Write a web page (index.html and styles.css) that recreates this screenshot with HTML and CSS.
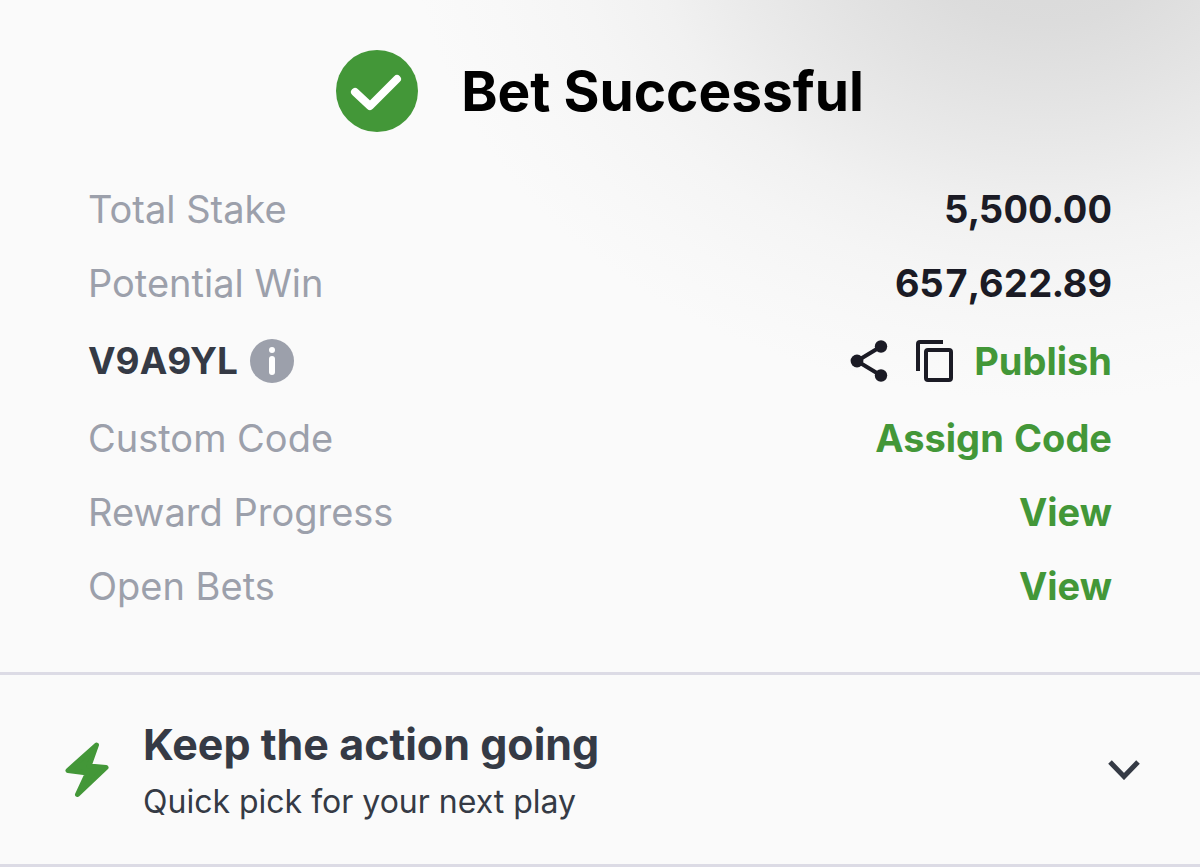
FILE: index.html
```html
<!DOCTYPE html>
<html lang="en">
<head>
<meta charset="utf-8">
<meta name="viewport" content="width=device-width, initial-scale=1">
<title>Bet Successful</title>
<link rel="stylesheet" href="styles.css">
</head>
<body>
<main class="page">
  <section class="receipt">
    <header class="heading">
      <svg class="heading-icon" viewBox="0 0 82 82" aria-hidden="true">
        <circle cx="41" cy="41" r="41" fill="#439738"/>
        <path d="M19 42 L34 56 L61 29" fill="none" stroke="#fff" stroke-width="8" stroke-linecap="round" stroke-linejoin="round"/>
      </svg>
      <h1 class="title">Bet Successful</h1>
    </header>
    <dl class="details">
      <div class="row">
        <dt class="label">Total Stake</dt>
        <dd class="value">5,500.00</dd>
      </div>
      <div class="row">
        <dt class="label">Potential Win</dt>
        <dd class="value">657,622.89</dd>
      </div>
      <div class="row row-code">
        <dt class="code">V9A9YL
          <button class="icon-button" type="button" aria-label="About booking code">
            <svg class="info-icon" viewBox="0 0 44 44" aria-hidden="true">
              <circle cx="22" cy="22" r="22" fill="#9ca0ab"/>
              <circle cx="22" cy="11" r="3" fill="#fff"/>
              <path d="M22 20V33" stroke="#fff" stroke-width="6" stroke-linecap="round"/>
            </svg>
          </button>
        </dt>
        <dd class="actions">
          <button class="icon-button" type="button" aria-label="Share">
            <svg class="share-icon" viewBox="0 0 38 42" aria-hidden="true">
              <path d="M31 6.500L7 21L31 35.500" fill="none" stroke="#1b1b25" stroke-width="4"/>
              <circle cx="31" cy="6.500" r="6.200" fill="#1b1b25"/>
              <circle cx="7" cy="21" r="6.400" fill="#1b1b25"/>
              <circle cx="31" cy="35.500" r="6.200" fill="#1b1b25"/>
            </svg>
          </button>
          <button class="icon-button" type="button" aria-label="Copy">
            <svg class="copy-icon" viewBox="0 0 38 42" aria-hidden="true">
              <path d="M27 2H4Q2 2 2 4V31" fill="none" stroke="#1b1b25" stroke-width="4"/>
              <rect x="10" y="10" width="25" height="30" rx="2" fill="none" stroke="#1b1b25" stroke-width="4"/>
            </svg>
          </button>
          <button class="link-button" type="button">Publish</button>
        </dd>
      </div>
      <div class="row">
        <dt class="label">Custom Code</dt>
        <dd class="value"><button class="link-button" type="button">Assign Code</button></dd>
      </div>
      <div class="row">
        <dt class="label">Reward Progress</dt>
        <dd class="value"><a class="link" href="#rewards">View</a></dd>
      </div>
      <div class="row">
        <dt class="label">Open Bets</dt>
        <dd class="value"><a class="link" href="#bets">View</a></dd>
      </div>
    </dl>
  </section>
  <button class="quick-pick" type="button" aria-expanded="false">
    <svg class="bolt-icon" viewBox="0 0 44 56" aria-hidden="true">
      <path d="M31.500 3L3 28.500L22.500 31L12.500 52.500L41 25.500L24 24Z" fill="#439738" stroke="#439738" stroke-width="5" stroke-linejoin="round"/>
    </svg>
    <span class="quick-text">
      <span class="quick-title">Keep the action going</span>
      <span class="quick-subtitle">Quick pick for your next play</span>
    </span>
    <svg class="chevron-icon" viewBox="0 0 32 20" aria-hidden="true">
      <path d="M2 2L16 16.500L30 2" fill="none" stroke="#353a45" stroke-width="5"/>
    </svg>
  </button>
</main>
</body>
</html>
```
FILE: styles.css
```css
* {
  box-sizing: border-box;
}

body {
  margin: 0;
  background: #fafafa;
  color: #1b1b25;
  font-family: Inter, "Liberation Sans", sans-serif;
}

button {
  padding: 0;
  border: 0;
  background: none;
  color: inherit;
  font: inherit;
  cursor: pointer;
}

svg {
  display: block;
  flex: none;
}

.receipt {
  padding: 50px 88px 63px;
  background: radial-gradient(ellipse 630px 470px at 87% -70px,
    #d8d8d8 0%, #dcdcdc 20%, #e3e3e3 35%, #eaeaea 49%, #f1f1f1 62%, #f5f5f5 74%, #f8f8f8 88%, #fafafa 100%);
}

.heading {
  display: flex;
  align-items: center;
  justify-content: center;
  gap: 43px;
}

.heading-icon {
  width: 82px;
  height: 82px;
}

.title {
  margin: 0;
  color: #000;
  font-size: 55px;
  font-weight: 700;
  line-height: 68px;
}

.details {
  display: flex;
  flex-direction: column;
  gap: 28px;
  margin: 54px 0 0;
  font-size: 38px;
  line-height: 46px;
}

.row {
  display: flex;
  align-items: center;
  justify-content: space-between;
}

.row-code {
  min-height: 53px;
}

.label {
  color: #9ca0ab;
}

.value,
.actions {
  margin: 0;
  font-weight: 700;
  font-variant-numeric: tabular-nums;
}

.code {
  display: flex;
  align-items: center;
  gap: 12px;
  color: #353a45;
  font-size: 37px;
  font-weight: 700;
}

.info-icon {
  width: 44px;
  height: 44px;
}

.actions {
  display: flex;
  align-items: center;
  gap: 20px;
}

.share-icon {
  width: 38px;
  height: 42px;
  margin-right: 8px;
}

.copy-icon {
  width: 38px;
  height: 42px;
}

.link,
.link-button {
  color: #439738;
  text-decoration: none;
}

.quick-pick {
  display: flex;
  align-items: center;
  width: 100%;
  padding: 41px 60px 40px 65px;
  border-top: 3px solid #dcdbe5;
  border-bottom: 3px solid #dcdbe5;
  color: #353a45;
  text-align: left;
}

.bolt-icon {
  width: 44px;
  height: 56px;
}

.quick-text {
  display: flex;
  flex: 1;
  flex-direction: column;
  gap: 8px;
  padding-left: 34px;
}

.quick-title {
  font-size: 43px;
  font-weight: 700;
  line-height: 56px;
}

.quick-subtitle {
  font-size: 32px;
  line-height: 44px;
}

.chevron-icon {
  width: 32px;
  height: 20px;
}
```
